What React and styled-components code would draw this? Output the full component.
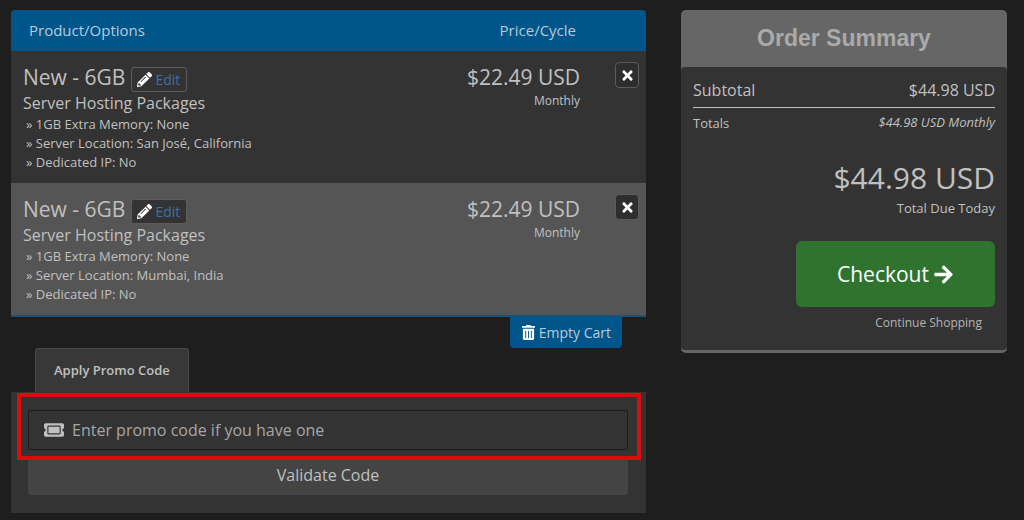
import React, { useState } from 'react';
import styled, { createGlobalStyle } from 'styled-components';
import { FaArrowRight, FaPencilAlt, FaTicketAlt, FaTimes, FaTrashAlt } from 'react-icons/fa';

const items = [
  {
    id: 1,
    name: 'New - 6GB',
    group: 'Server Hosting Packages',
    options: ['1GB Extra Memory: None', 'Server Location: San José, California', 'Dedicated IP: No'],
    price: '$22.49 USD',
    cycle: 'Monthly',
  },
  {
    id: 2,
    name: 'New - 6GB',
    group: 'Server Hosting Packages',
    options: ['1GB Extra Memory: None', 'Server Location: Mumbai, India', 'Dedicated IP: No'],
    price: '$22.49 USD',
    cycle: 'Monthly',
  },
];

function CartItems() {
  return (
    <CartTable>
      <thead>
        <tr>
          <HeadCell scope="col">Product/Options</HeadCell>
          <HeadCell scope="col" $right>Price/Cycle</HeadCell>
          <HeadCell as="td" />
        </tr>
      </thead>
      <tbody>
        {items.map((item) => (
          <ItemRow key={item.id}>
            <ItemCell>
              <ItemTitle>
                {item.name}
                <EditButton type="button">
                  <FaPencilAlt size={15} color="#fff" />
                  Edit
                </EditButton>
              </ItemTitle>
              <ItemGroup>{item.group}</ItemGroup>
              <OptionList>
                {item.options.map((option) => (
                  <li key={option}>» {option}</li>
                ))}
              </OptionList>
            </ItemCell>
            <PriceCell>
              <Price>{item.price}</Price>
              <Cycle>{item.cycle}</Cycle>
            </PriceCell>
            <RemoveCell>
              <RemoveButton type="button" aria-label="Remove">
                <FaTimes size={15} />
              </RemoveButton>
            </RemoveCell>
          </ItemRow>
        ))}
      </tbody>
    </CartTable>
  );
}

function PromoCode() {
  const [code, setCode] = useState('');

  return (
    <section>
      <Tab type="button">Apply Promo Code</Tab>
      <PromoPanel>
        <Highlight />
        <PromoField>
          <FaTicketAlt size={20} />
          <PromoInput
            aria-label="Promo code"
            placeholder="Enter promo code if you have one"
            value={code}
            onChange={(e) => setCode(e.target.value)}
          />
        </PromoField>
        <ValidateButton type="button">Validate Code</ValidateButton>
      </PromoPanel>
    </section>
  );
}

function OrderSummary() {
  return (
    <SummaryCard>
      <SummaryTitle>Order Summary</SummaryTitle>
      <SummaryBody>
        <Subtotal>
          <span>Subtotal</span>
          <span>$44.98 USD</span>
        </Subtotal>
        <Totals>
          <span>Totals</span>
          <em>$44.98 USD Monthly</em>
        </Totals>
        <TotalDue>$44.98 USD</TotalDue>
        <DueLabel>Total Due Today</DueLabel>
        <CheckoutButton type="button">
          Checkout
          <FaArrowRight size={21} />
        </CheckoutButton>
        <ContinueLink href="#">Continue Shopping</ContinueLink>
      </SummaryBody>
    </SummaryCard>
  );
}

export default function App() {
  return (
    <>
      <GlobalStyle />
      <Page>
        <main>
          <CartItems />
          <EmptyCart>
            <EmptyButton type="button">
              <FaTrashAlt size={15} color="#fff" />
              Empty Cart
            </EmptyButton>
          </EmptyCart>
          <PromoCode />
        </main>
        <OrderSummary />
      </Page>
    </>
  );
}

const GlobalStyle = createGlobalStyle`
  * {
    box-sizing: border-box;
  }
  body {
    margin: 0;
    background: #1e1e1e;
    color: #c0c0c0;
    font: 16px/20px "Open Sans", sans-serif;
  }
  button, input {
    font-family: inherit;
    color: inherit;
  }
  button {
    cursor: pointer;
  }
`

const Page = styled.div`
  display: grid;
  grid-template-columns: 635fr 326fr;
  align-items: start;
  gap: 35px;
  padding: 10px 17px 7px 11px;
`

const CartTable = styled.table`
  width: 100%;
  border-spacing: 0;
  border-bottom: 2px solid #1a5276;
`

const HeadCell = styled.th`
  height: 41px;
  padding: 0 4px 2px 18px;
  background: #00558b;
  color: #b9cbd8;
  font-size: 15px;
  font-weight: 400;
  text-align: ${props => (props.$right ? 'right' : 'left')};
  &:first-child {
    border-top-left-radius: 4px;
  }
  &:last-child {
    border-top-right-radius: 4px;
  }
`

const ItemRow = styled.tr`
  background: #333;
  vertical-align: top;
  &:nth-child(even) {
    background: #555;
  }
`

const ItemCell = styled.td`
  padding: 12px 0 11px 12px;
`

const ItemTitle = styled.div`
  display: flex;
  align-items: center;
  gap: 6px;
  height: 29px;
  font-size: 21px;
  line-height: 29px;
`

const EditButton = styled.button`
  display: flex;
  align-items: center;
  gap: 3px;
  height: 25px;
  margin-top: 4px;
  padding: 0 6px 0 5px;
  border: 1px solid #5c5c5c;
  border-radius: 3px;
  background: #333;
  color: #3a70a8;
  font-size: 14px;
`

const ItemGroup = styled.div`
  line-height: 23px;
`

const OptionList = styled.ul`
  margin: 0;
  padding: 0 0 0 3px;
  list-style: none;
  font-size: 13px;
  line-height: 19px;
`

const PriceCell = styled.td`
  width: 150px;
  padding: 12px 0 0;
  text-align: right;
`

const Price = styled.div`
  font-size: 21px;
  line-height: 28px;
`

const Cycle = styled.div`
  font-size: 12px;
  line-height: 19px;
`

const RemoveCell = styled.td`
  width: 66px;
  padding: 11px 7px 0 0;
`

const RemoveButton = styled.button`
  display: flex;
  align-items: center;
  justify-content: center;
  width: 24px;
  height: 26px;
  margin-left: auto;
  padding: 0;
  border: 1px solid #5c5c5c;
  border-radius: 4px;
  background: #2e2e2e;
  color: #fff;
`

const EmptyCart = styled.div`
  display: flex;
  justify-content: flex-end;
  padding-right: 24px;
`

const EmptyButton = styled.button`
  display: flex;
  align-items: center;
  gap: 3px;
  height: 31px;
  padding: 0 11px;
  border: 0;
  border-radius: 0 0 4px 4px;
  background: #00558b;
  color: #b9cbd8;
  font-size: 14px;
`

const Tab = styled.button`
  display: block;
  height: 44px;
  margin-left: 24px;
  padding: 0 18px 2px;
  border: 1px solid #4a4a4a;
  border-bottom: 0;
  border-radius: 4px 4px 0 0;
  background: #383838;
  font-size: 13px;
  font-weight: 600;
`

const PromoPanel = styled.div`
  position: relative;
  padding: 18px 18px 18px 17px;
  background: #333;
`

/* callout frame drawn over the promo field */
const Highlight = styled.div`
  position: absolute;
  top: 1px;
  left: 6px;
  right: 5px;
  height: 67px;
  border: 4px solid #dc0c0c;
  pointer-events: none;
`

const PromoField = styled.label`
  display: flex;
  align-items: center;
  gap: 8px;
  height: 40px;
  padding: 0 15px;
  border: 1px solid #1c1c1c;
  border-radius: 2px;
`

const PromoInput = styled.input`
  flex: 1;
  padding: 0;
  border: 0;
  outline: 0;
  background: transparent;
  font-size: 16px;
  &::placeholder {
    color: #a6a6a6;
    opacity: 1;
  }
`

const ValidateButton = styled.button`
  display: block;
  width: 100%;
  height: 39px;
  margin-top: 6px;
  padding: 0 0 2px;
  border: 0;
  border-radius: 3px;
  background: #444;
  font-size: 16px;
`

const SummaryCard = styled.aside`
  border-bottom: 3px solid #666;
  border-radius: 5px;
  background: #666;
`

const SummaryTitle = styled.h2`
  margin: 0;
  color: #aaa;
  font: bold 23px/57px "Liberation Sans", Arial, sans-serif;
  text-align: center;
`

const SummaryBody = styled.div`
  display: flex;
  flex-direction: column;
  padding: 12px 12px 17px;
  border-radius: 4px;
  background: #333;
`

const Subtotal = styled.div`
  display: flex;
  justify-content: space-between;
  padding-bottom: 6px;
  border-bottom: 1px solid #c0c0c0;
  line-height: 22px;
`

const Totals = styled.div`
  display: flex;
  justify-content: space-between;
  padding-top: 4px;
  font-size: 13px;
  line-height: 22px;
  em {
    line-height: 20px;
  }
`

const TotalDue = styled.div`
  margin-top: 24px;
  font-size: 30px;
  line-height: 40px;
  text-align: right;
`

const DueLabel = styled.div`
  font-size: 13px;
  line-height: 20px;
  text-align: right;
`

const CheckoutButton = styled.button`
  display: flex;
  align-items: center;
  justify-content: center;
  gap: 4px;
  align-self: flex-end;
  width: 199px;
  height: 66px;
  margin-top: 23px;
  padding: 0;
  border: 0;
  border-radius: 6px;
  background: #2f732f;
  color: #fff;
  font-size: 21px;
`

const ContinueLink = styled.a`
  align-self: flex-end;
  margin-top: 6px;
  padding-right: 13px;
  color: #b4b4b4;
  font-size: 12px;
  text-decoration: none;
`
